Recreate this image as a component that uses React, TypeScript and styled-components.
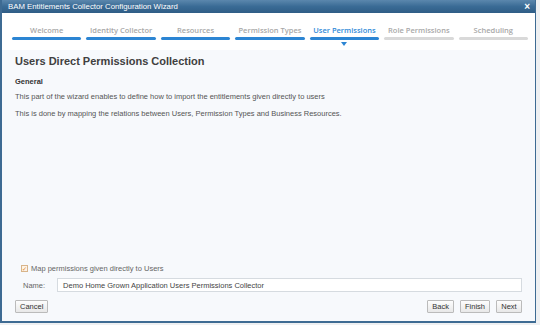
import styled, { createGlobalStyle } from "styled-components"

const Global = createGlobalStyle`
html, body {
  margin: 0;
  padding: 0;
  background: #eef0f2;
}
body {
  font-family: "Liberation Sans", Arial, sans-serif;
}
`

const Window = styled.div`
width: 533px;
height: 321px;
border: 2px solid #3e6b93;
border-top: none;
border-right-width: 1px;
display: flex;
flex-direction: column;
background: #f7f9fc;
`

const TitleBar = styled.div`
height: 13px;
flex: none;
display: flex;
align-items: center;
justify-content: space-between;
padding: 0 5px 0 6px;
background: linear-gradient(#5b87ad, #3a6b95 50%, #2f5d86);
color: #fff;
font-size: 7.8px;
`

const Close = styled.span`
font-size: 10px;
font-weight: bold;
line-height: 1;
`

const StepsArea = styled.div`
background: #fff;
padding: 12px 7px 0 10px;
height: 37px;
box-sizing: border-box;
display: grid;
grid-template-columns: repeat(7, 1fr);
column-gap: 5px;
`

const Step = styled.div<{ $state: "done" | "active" | "todo" }>`
position: relative;
display: flex;
flex-direction: column;
align-items: center;
font-family: "Open Sans", sans-serif;
font-weight: 600;
font-size: 7.5px;
color: ${(p) => (p.$state === "active" ? "#2f8ad8" : "#a8a8a8")};
&::after {
  content: "";
  display: block;
  margin-top: 2px;
  align-self: stretch;
  height: 3px;
  border-radius: 2px;
  background: ${(p) => (p.$state === "todo" ? "#d9d9d9" : "#2c85d3")};
}
`

const Pointer = styled.span`
position: absolute;
top: 17px;
left: 50%;
margin-left: -3px;
width: 0;
height: 0;
border-left: 3px solid transparent;
border-right: 3px solid transparent;
border-top: 4px solid #2c85d3;
`

const Content = styled.div`
flex: 1;
display: flex;
flex-direction: column;
padding: 5px 13px 0 13px;
color: #555;
font-size: 7.5px;
`

const Heading = styled.h1`
margin: 0 0 10px;
font-size: 11px;
font-weight: bold;
color: #404040;
`

const Section = styled.h2`
margin: 0 0 6px;
font-size: 7.5px;
font-weight: bold;
color: #333;
`

const Para = styled.p`
margin: 0 0 8px;
`

const Spacer = styled.div`
flex: 1;
`

const CheckRow = styled.label`
display: flex;
align-items: center;
gap: 3px;
padding-left: 6px;
margin-bottom: 5px;
color: #666;
`

const Check = styled.span`
width: 5px;
height: 5px;
border: 1px solid #d8b48a;
background: #fdf3e6;
display: flex;
align-items: center;
justify-content: center;
color: #e0842a;
font-size: 6px;
line-height: 1;
`

const NameRow = styled.div`
display: flex;
align-items: center;
padding-left: 8px;
gap: 12px;
margin-bottom: 8px;
color: #666;
`

const NameInput = styled.div`
flex: 1;
height: 12px;
border: 1px solid #d6dbe0;
background: #fff;
display: flex;
align-items: center;
padding-left: 5px;
color: #444;
`

const Footer = styled.div`
display: flex;
align-items: center;
gap: 6px;
padding: 0 0 8px;
`

const Button = styled.button`
height: 13px;
padding: 0 4px;
min-width: 26px;
border: 1px solid #bbb;
border-radius: 1px;
background: linear-gradient(#fdfdfd, #e8e8e8);
font-family: "Liberation Sans", Arial, sans-serif;
font-size: 7.5px;
color: #333;
line-height: 1;
`

const steps: { label: string; state: "done" | "active" | "todo" }[] = [
  { label: "Welcome", state: "done" },
  { label: "Identity Collector", state: "done" },
  { label: "Resources", state: "done" },
  { label: "Permission Types", state: "done" },
  { label: "User Permissions", state: "active" },
  { label: "Role Permissions", state: "todo" },
  { label: "Scheduling", state: "todo" },
]

export default function App() {
  return (
    <>
      <Global />
      <Window>
        <TitleBar>
          <span>BAM Entitlements Collector Configuration Wizard</span>
          <Close>×</Close>
        </TitleBar>
        <StepsArea>
          {steps.map((s) => (
            <Step key={s.label} $state={s.state}>
              {s.label}
              {s.state === "active" && <Pointer />}
            </Step>
          ))}
        </StepsArea>
        <Content>
          <Heading>Users Direct Permissions Collection</Heading>
          <Section>General</Section>
          <Para>This part of the wizard enables to define how to import the entitlements given directly to users</Para>
          <Para>This is done by mapping the relations between Users, Permission Types and Business Resources.</Para>
          <Spacer />
          <CheckRow>
            <Check>✓</Check>
            Map permissions given directly to Users
          </CheckRow>
          <NameRow>
            <span>Name:</span>
            <NameInput>Demo Home Grown Application Users Permissions Collector</NameInput>
          </NameRow>
          <Footer>
            <Button>Cancel</Button>
            <Spacer />
            <Button>Back</Button>
            <Button>Finish</Button>
            <Button>Next</Button>
          </Footer>
        </Content>
      </Window>
    </>
  )
}
